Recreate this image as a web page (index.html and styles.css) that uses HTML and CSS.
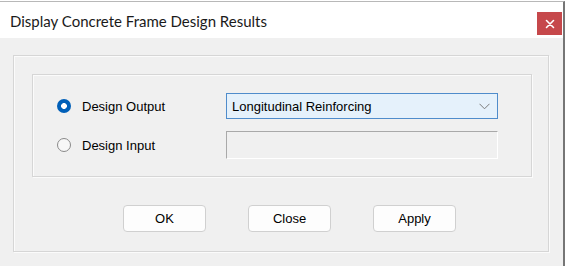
FILE: index.html
```html
<!DOCTYPE html>
<html>
<head>
<meta charset="utf-8">
<link rel="stylesheet" href="styles.css">
</head>
<body>
<div class="window">
  <div class="titlebar">
    <span class="title">Display Concrete Frame Design Results</span>
    <div class="close-btn">
      <svg width="10" height="10" viewBox="0 0 10 10"><path d="M1.5 1.5 L8.5 8.5 M8.5 1.5 L1.5 8.5" stroke="#fff" stroke-width="1.6" stroke-linecap="round"/></svg>
    </div>
  </div>
  <div class="client">
    <div class="group outer">
      <div class="group inner">
        <div class="row">
          <label class="opt"><span class="radio checked"></span><span>Design Output</span></label>
          <div class="combo">
            <span>Longitudinal Reinforcing</span>
            <svg class="chev" width="11" height="7" viewBox="0 0 11 7"><path d="M0.5 0.8 L5.5 5.8 L10.5 0.8" fill="none" stroke="#7a7a7a" stroke-width="1"/></svg>
          </div>
        </div>
        <div class="row">
          <label class="opt"><span class="radio"></span><span>Design Input</span></label>
          <div class="textbox"></div>
        </div>
      </div>
      <div class="buttons">
        <div class="btn">OK</div>
        <div class="btn">Close</div>
        <div class="btn">Apply</div>
      </div>
    </div>
  </div>
</div>
</body>
</html>
```
FILE: styles.css
```css
html, body {
  margin: 0;
  padding: 0;
  background: #ffffff;
}
body {
  width: 565px;
  height: 266px;
  overflow: hidden;
  font-family: "Liberation Sans", Arial, sans-serif;
  font-size: 13px;
  color: #000;
}
.window {
  margin-top: 1px;
  height: 265px;
  width: 565px;
  border-top: 1px solid #b8b8b8;
  border-right: 2px solid #767676;
  display: flex;
  flex-direction: column;
  box-sizing: border-box;
}
.titlebar {
  height: 36px;
  background: #fff;
  display: flex;
  align-items: flex-start;
  justify-content: space-between;
  flex: none;
}
.title {
  font-family: Lato, "Liberation Sans", sans-serif;
  font-size: 15px;
  color: #1a1a1a;
  margin-left: 10px;
  margin-top: 10px;
}
.close-btn {
  width: 25px;
  height: 23px;
  margin-top: 10px;
  margin-right: 1px;
  background: #c6484b;
  display: flex;
  align-items: center;
  justify-content: center;
}
.client {
  flex: 1;
  background: #f0f0f0;
  padding: 17px 14px 12px 13px;
}
.group {
  border: 1px solid #d6d6d6;
  box-shadow: inset 1px 1px 0 #fbfbfb, 1px 1px 0 #fbfbfb;
}
.outer {
  height: 197px;
  padding: 18px 0 0 18px;
  box-sizing: border-box;
}
.inner {
  width: 500px;
  height: 103px;
  box-sizing: border-box;
  padding: 18px 0 0 24px;
  display: flex;
  flex-direction: column;
  gap: 12px;
}
.row {
  display: flex;
  align-items: center;
}
.opt {
  width: 169px;
  display: flex;
  align-items: center;
  gap: 11px;
}
.radio {
  width: 14px;
  height: 14px;
  border-radius: 50%;
  box-sizing: border-box;
  border: 1px solid #8a8a8a;
  background: #f7f7f7;
  flex: none;
}
.radio.checked {
  border: none;
  background: radial-gradient(circle, #ffffff 0 2.6px, #005fb8 3.2px);
}
.combo {
  width: 272px;
  height: 26px;
  box-sizing: border-box;
  border: 1px solid #4f8ccb;
  background: #e5f1fb;
  display: flex;
  align-items: center;
  justify-content: space-between;
  padding: 0 7px 0 5px;
}
.textbox {
  width: 272px;
  height: 28px;
  box-sizing: border-box;
  background: #f0f0f0;
  border-top: 1px solid #a9a9a9;
  border-left: 1px solid #a9a9a9;
  border-bottom: 1px solid #ffffff;
  border-right: 1px solid #ffffff;
}
.buttons {
  display: flex;
  gap: 42px;
  padding-left: 91px;
  margin-top: 28px;
}
.btn {
  width: 83px;
  height: 27px;
  box-sizing: border-box;
  border: 1px solid #d0d0d0;
  border-radius: 4px;
  background: #fdfdfd;
  display: flex;
  align-items: center;
  justify-content: center;
}
```
